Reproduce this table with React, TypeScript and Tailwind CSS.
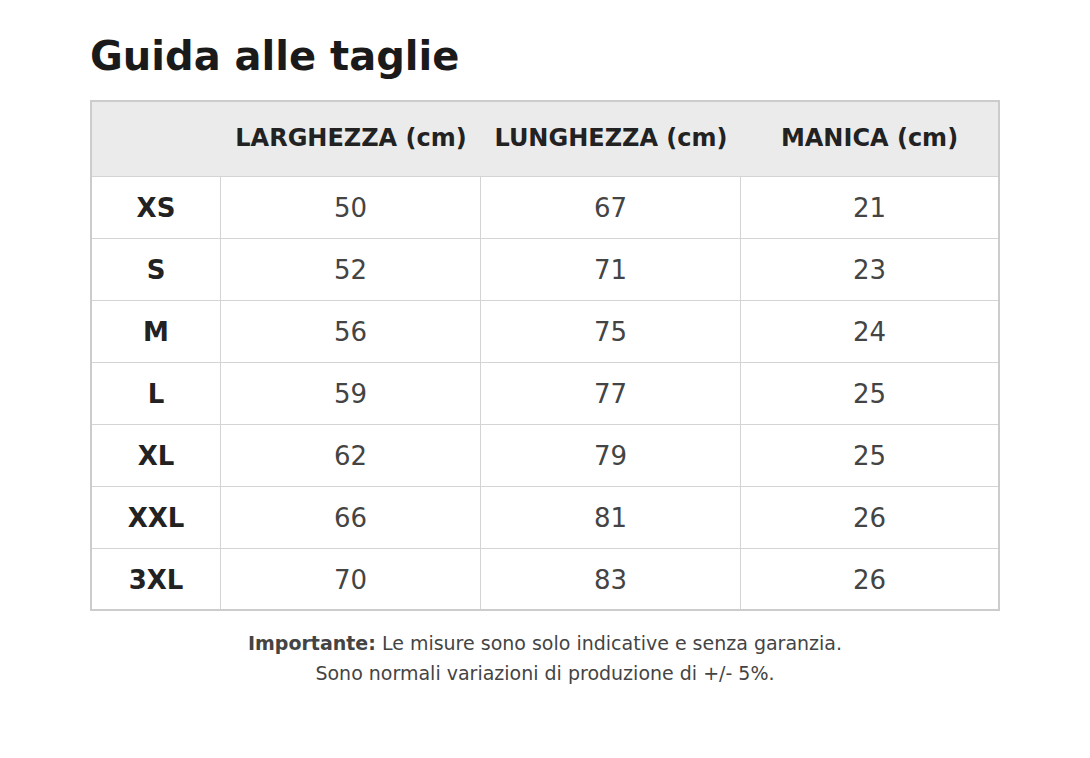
import React from "react";

const rows: [string, number, number, number][] = [
  ["XS", 50, 67, 21],
  ["S", 52, 71, 23],
  ["M", 56, 75, 24],
  ["L", 59, 77, 25],
  ["XL", 62, 79, 25],
  ["XXL", 66, 81, 26],
  ["3XL", 70, 83, 26],
];

export default function App() {
  return (
    <div
      className="min-h-[758px] w-[1090px] bg-white"
      style={{ fontFamily: '"DejaVu Sans", Verdana, sans-serif' }}
    >
      <div className="ml-[90px] w-[910px] pt-[36px]">
        <h1 className="mb-[24px] text-[40px] font-bold leading-[40px] text-[#1a1a1a]">
          Guida alle taglie
        </h1>
        <div className="border-2 border-[#cccccc]">
          <div className="grid h-[75px] grid-cols-[129px_260px_260px_1fr] border-b border-[#d4d4d4] bg-[#ebebeb] pb-[3px] text-[24px] font-bold text-[#222]">
            <div className="flex items-center justify-center" />
            <div className="flex items-center justify-center">LARGHEZZA (cm)</div>
            <div className="flex items-center justify-center">LUNGHEZZA (cm)</div>
            <div className="flex items-center justify-center">MANICA (cm)</div>
          </div>
          {rows.map(([s, a, b, c], i) => (
            <div
              key={s}
              className={
                i < rows.length - 1
                  ? "grid h-[62px] grid-cols-[129px_260px_260px_1fr] border-b border-[#d4d4d4] text-[26px]"
                  : "grid h-[60px] grid-cols-[129px_260px_260px_1fr] text-[26px]"
              }
            >
              <div className="flex items-center justify-center border-r border-[#d4d4d4] pt-[2px] font-bold text-[#222]">
                {s}
              </div>
              <div className="flex items-center justify-center border-r border-[#d4d4d4] pt-[2px] text-[#444]">
                {a}
              </div>
              <div className="flex items-center justify-center border-r border-[#d4d4d4] pt-[2px] text-[#444]">
                {b}
              </div>
              <div className="flex items-center justify-center pt-[2px] text-[#444]">{c}</div>
            </div>
          ))}
        </div>
        <div className="mt-[17px] text-center text-[19px] leading-[30px] text-[#444]">
          <p>
            <span className="font-bold">Importante:</span> Le misure sono solo indicative e senza garanzia.
          </p>
          <p>Sono normali variazioni di produzione di +/- 5%.</p>
        </div>
      </div>
    </div>
  );
}
